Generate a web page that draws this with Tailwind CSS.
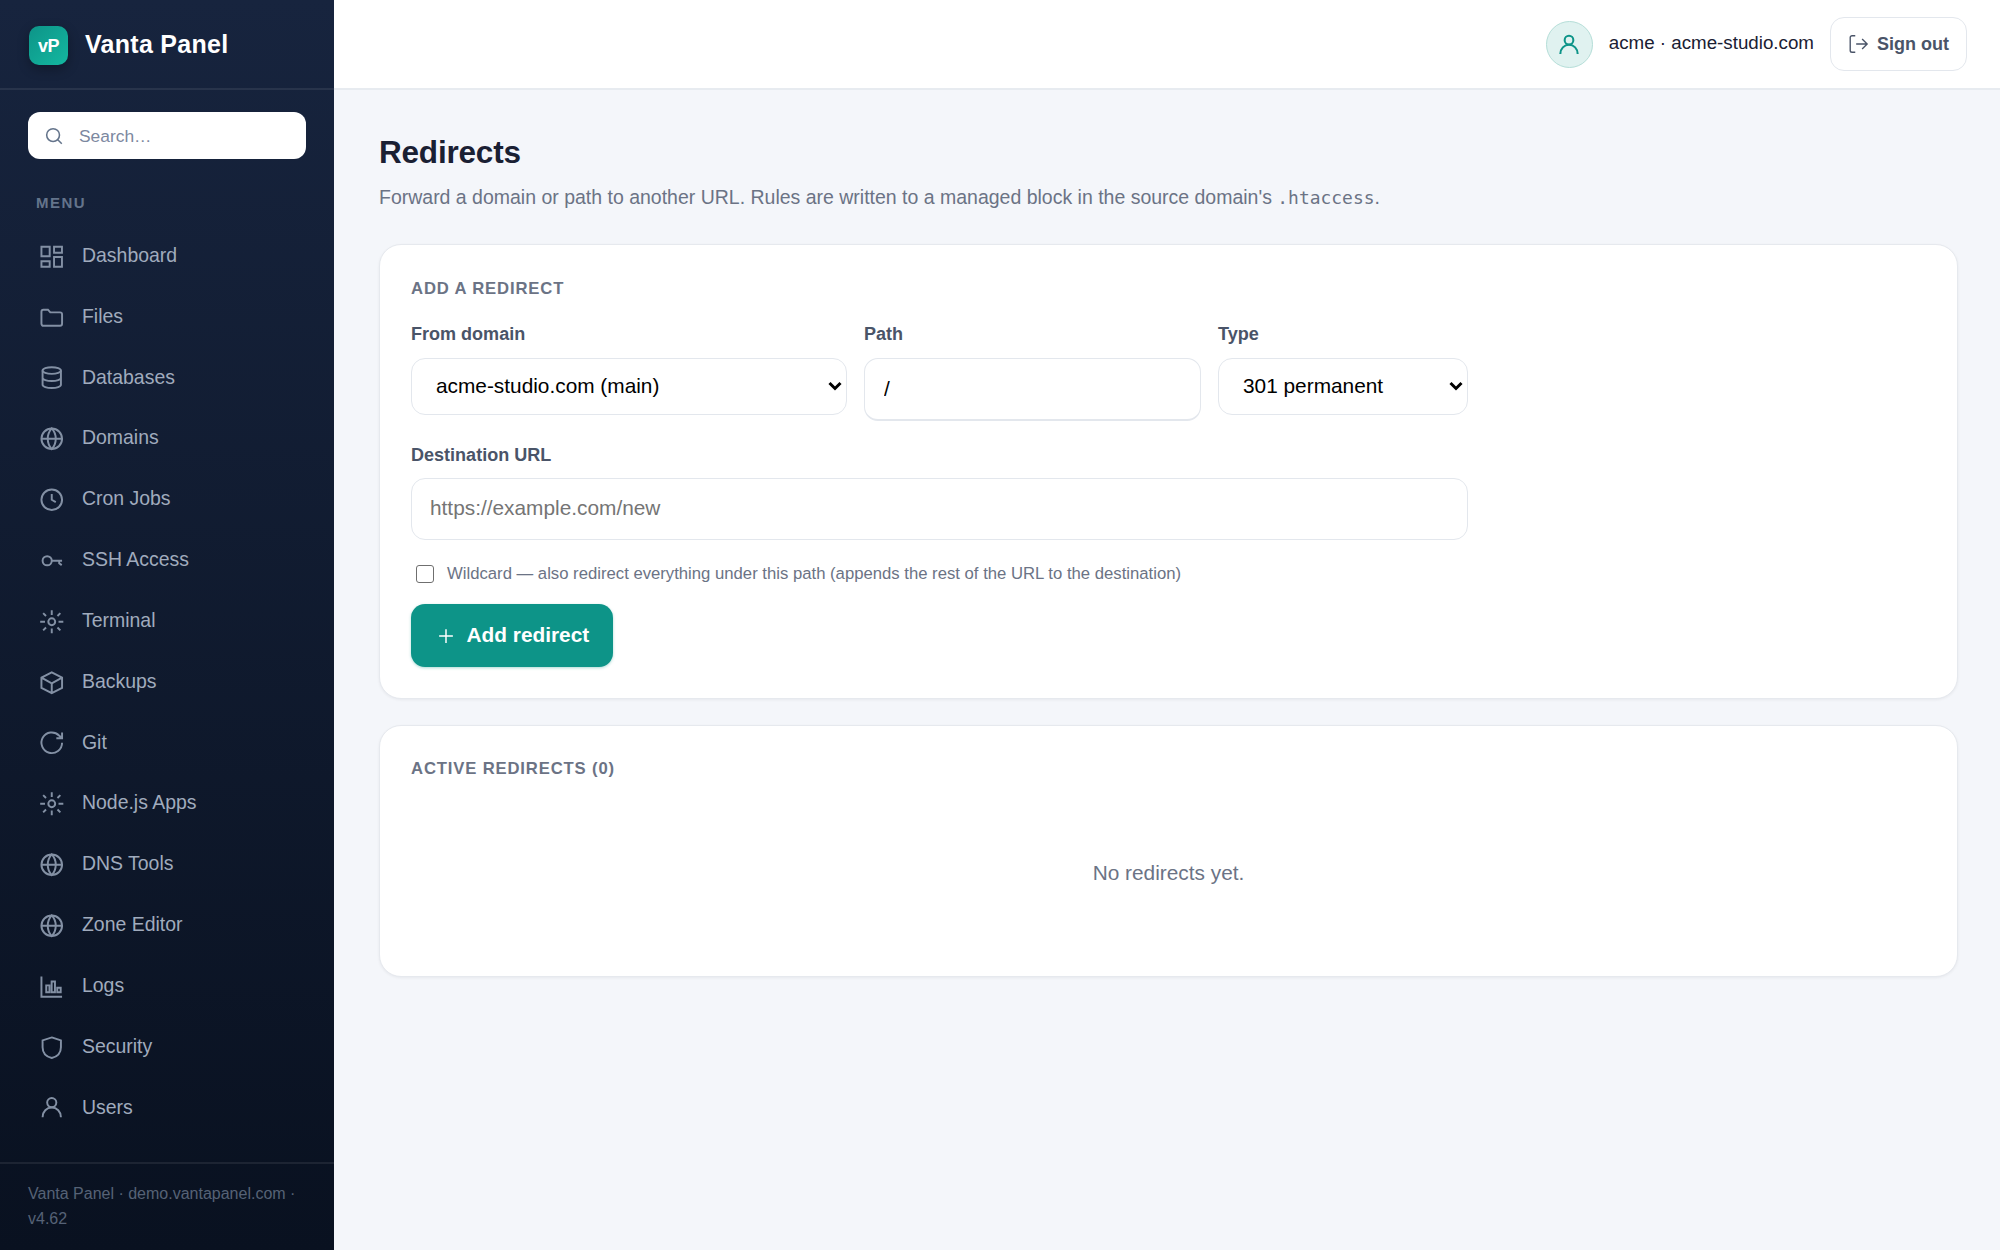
<!DOCTYPE html>
<html lang="en">
<head>
  <meta charset="UTF-8">
  <meta name="viewport" content="width=device-width, initial-scale=1.0">
  <title>Redirects - Vanta Panel</title>
  <script src="https://cdn.jsdelivr.net/npm/@tailwindcss/browser@4"></script>
</head>
<body class="flex h-screen overflow-hidden bg-[#f4f6fa] font-['Liberation_Sans',Arial,sans-serif] text-[#1a2033]">

  <!-- Icon set -->
  <svg class="hidden">
    <symbol id="i-dashboard" viewBox="0 0 24 24"><path d="M3 3.200h7.200v8.400H3zM14 3.200h6.900v5.300H14zM14 12.200h6.900v8.600H14zM3 16h7.200v4.800H3z"/></symbol>
    <symbol id="i-folder" viewBox="0 0 24 24"><path d="M3 6.700a1.700 1.700 0 0 1 1.700-1.700h4l2 2.300h8.600A1.700 1.700 0 0 1 21 9v8.300a1.700 1.700 0 0 1-1.700 1.700H4.700A1.700 1.700 0 0 1 3 17.300z"/></symbol>
    <symbol id="i-database" viewBox="0 0 24 24"><ellipse cx="12" cy="5.700" rx="8" ry="2.900"/><path d="M4 5.700v12.400c0 1.600 3.580 2.900 8 2.900s8-1.300 8-2.900V5.700M4 12c0 1.600 3.580 2.900 8 2.900s8-1.300 8-2.900"/></symbol>
    <symbol id="i-globe" viewBox="0 0 24 24"><circle cx="12" cy="12" r="9"/><path d="M3 12h18M12 3c2.400 2.600 3.500 5.700 3.500 9s-1.100 6.400-3.500 9c-2.400-2.600-3.500-5.700-3.500-9s1.100-6.400 3.500-9z"/></symbol>
    <symbol id="i-clock" viewBox="0 0 24 24"><circle cx="12" cy="12" r="9"/><path d="M12 7v5l3.500 2"/></symbol>
    <symbol id="i-key" viewBox="0 0 24 24"><circle cx="8" cy="12" r="4"/><path d="M12 12h9M18.500 12v2.200l2.200 1.600"/></symbol>
    <symbol id="i-gear" viewBox="0 0 24 24"><circle cx="12" cy="12" r="3"/><path d="M12 1.900v4.200M12 17.900v4.200M1.900 12h4.200M17.900 12h4.200M4.500 4.500l2.500 2.500M17 17l2.500 2.500M4.500 19.500L7 17M17 7l2.500-2.500"/></symbol>
    <symbol id="i-box" viewBox="0 0 24 24"><path d="M12 2.900l9 4.700v8.800l-9 4.700-9-4.700V7.600zM3 7.600l9 4.900 9-4.900M12 12.500v8.600"/></symbol>
    <symbol id="i-refresh" viewBox="0 0 24 24"><path d="M21 12a9 9 0 1 1-2.640-6.360L21 8M21 3v5h-5"/></symbol>
    <symbol id="i-chart" viewBox="0 0 24 24"><path d="M3 3v17.800h18M7.200 10.800h2.800v6H7.200zM11.900 7.400h2.900v9.400h-2.900zM16.800 12.800h3v4h-3z"/></symbol>
    <symbol id="i-shield" viewBox="0 0 24 24"><path d="M12 3l8 2.600v5.900c0 5-3.200 8.200-8 9.500-4.800-1.300-8-4.500-8-9.500V5.600z"/></symbol>
    <symbol id="i-user" viewBox="0 0 24 24"><circle cx="12" cy="7.500" r="4"/><path d="M4 20.200c0-4.800 3.600-8.400 8-8.400s8 3.600 8 8.400"/></symbol>
    <symbol id="i-search" viewBox="0 0 24 24"><circle cx="11" cy="11" r="7"/><path d="M20.500 20.500l-4.400-4.400"/></symbol>
    <symbol id="i-logout" viewBox="0 0 24 24"><path d="M9 3H5.500a2 2 0 0 0-2 2v14a2 2 0 0 0 2 2H9M10 12h12M16.500 6.500L22 12l-5.500 5.500"/></symbol>
    <symbol id="i-plus" viewBox="0 0 24 24"><path d="M12 4.500v15M4.500 12h15"/></symbol>
  </svg>

  <!-- Sidebar -->
  <aside class="flex w-[334px] shrink-0 flex-col bg-linear-to-b from-[#17243e] to-[#091120]">
    <div class="flex h-[90px] shrink-0 items-center gap-[17px] border-b-2 border-white/8 px-[29px]">
      <div class="mt-0.5 flex size-[39px] items-center justify-center rounded-[10px] bg-linear-to-br from-[#0d9488] to-[#14b8a0] pt-px text-lg font-bold tracking-[-0.500px] text-white shadow-[0_4px_12px_rgba(0,0,0,0.3)]">vP</div>
      <span class="pt-px text-[25px] font-bold tracking-[0.280px] text-white">Vanta Panel</span>
    </div>

    <div class="mx-7 mt-[22px] flex h-[47px] shrink-0 items-center gap-[14px] rounded-xl bg-white pl-[15px]">
      <svg class="size-[22px] shrink-0 fill-none stroke-[#64748b] stroke-[1.700]"><use href="#i-search"/></svg>
      <input type="text" placeholder="Search…" class="w-40 pt-px text-[17.400px] text-[#1a2033] outline-none placeholder:text-[#7c88a0]">
    </div>

    <div class="mt-[34px] pl-9 text-[15px] leading-5 font-bold tracking-[1.500px] text-[#64748b]">MENU</div>

    <nav id="menu" class="mt-3 flex flex-col"></nav>

    <div class="mt-auto h-[88px] border-t-2 border-white/8 px-7 pt-[17px] text-[16px] leading-[25px] text-[#566276]">Vanta Panel · demo.vantapanel.com · v4.62</div>
  </aside>

  <div class="flex min-w-0 flex-1 flex-col">
    <!-- Top bar -->
    <header class="flex h-[90px] shrink-0 items-center justify-end border-b-2 border-[#e7ebf0] bg-white pr-[33px]">
      <div class="flex size-[47px] items-center justify-center rounded-full border border-[#b5ded8] bg-[#e0f2f0]">
        <svg class="mt-px size-[26px] fill-none stroke-[#0d9488] stroke-[1.900]"><use href="#i-user"/></svg>
      </div>
      <span class="ml-4 pb-px text-[18.750px]">acme · acme-studio.com</span>
      <button class="ml-4 flex h-[54px] w-[137px] items-center gap-2 rounded-[14px] border border-[#e3e7ed] pl-4 text-lg font-bold text-[#4a5468]">
        <svg class="size-[22px] fill-none stroke-current stroke-[1.500]"><use href="#i-logout"/></svg>
        <span class="pb-px">Sign out</span>
      </button>
    </header>

    <main class="flex-1 pt-[42px] pr-[42px] pl-[45px]">
      <h1 class="text-[31.500px] leading-10 font-bold tracking-[-0.200px]">Redirects</h1>
      <p class="mt-2.5 text-[19.490px] leading-[30px] text-[#6b7385]">Forward a domain or path to another URL. Rules are written to a managed block in the source domain's <code class="font-['DejaVu_Sans_Mono',monospace] text-[17.950px]">.htaccess</code>.</p>

      <section class="mt-[31px] h-[455px] rounded-[22px] border border-[#e6e9ee] bg-white px-[31px] pt-[34px] shadow-[0_1px_3px_rgba(16,24,40,0.06)]">
        <h2 class="text-[16.670px] leading-5 font-bold tracking-[0.850px] text-[#6b7385]">ADD A REDIRECT</h2>

        <form>
          <div class="mt-[23px] flex gap-[17px] text-[20.830px] text-black">
            <div class="w-[436px]">
              <label class="block text-[18.050px] leading-6 font-bold text-[#4a5468]">From domain</label>
              <div class="relative mt-3">
                <select class="block h-[57px] w-full appearance-none rounded-[14px] border border-[#e3e7ed] bg-white pb-px pl-6 outline-none"><option>acme-studio.com (main)</option></select>
                <svg viewBox="0 0 14 10" class="absolute top-[23px] right-[5px] h-2.5 w-3.5 fill-none stroke-black stroke-3"><path d="M1.500 2l5.500 5.500L12.500 2"/></svg>
              </div>
            </div>
            <div class="w-[337px]">
              <label class="block text-[18.050px] leading-6 font-bold text-[#4a5468]">Path</label>
              <input type="text" value="/" class="mt-3 block h-[63px] w-full rounded-[14px] border border-b-2 border-[#e3e7ed] px-[19px] pb-px outline-none">
            </div>
            <div class="w-[250px]">
              <label class="block text-[18.050px] leading-6 font-bold text-[#4a5468]">Type</label>
              <div class="relative mt-3">
                <select class="block h-[57px] w-full appearance-none rounded-[14px] border border-[#e3e7ed] bg-white pb-px pl-6 outline-none"><option>301 permanent</option></select>
                <svg viewBox="0 0 14 10" class="absolute top-[23px] right-[5px] h-2.5 w-3.5 fill-none stroke-black stroke-3"><path d="M1.500 2l5.500 5.500L12.500 2"/></svg>
              </div>
            </div>
          </div>

          <label class="mt-[22px] block text-[18.050px] leading-6 font-bold text-[#4a5468]">Destination URL</label>
          <input type="text" placeholder="https://example.com/new" class="mt-[11px] block h-[62px] w-[1057px] rounded-[14px] border border-[#e3e7ed] px-[18px] pb-0.5 text-[20.830px] outline-none placeholder:text-[#757575]">

          <label class="mt-[22px] flex h-6 items-center gap-[13px] pl-[5px] text-[16.700px] text-[#6b7385]">
            <input type="checkbox" class="size-[18px] appearance-none rounded-[3px] border-[1.500px] border-[#6f6f6f]">
            Wildcard — also redirect everything under this path (appends the rest of the URL to the destination)
          </label>

          <button type="button" class="mt-[18px] flex h-[63px] w-[202px] items-center gap-[10px] rounded-[14px] bg-[#0d9488] pb-px pl-[23.500px] text-[20.830px] font-bold text-white shadow-[0_1px_3px_rgba(13,148,136,0.35)]">
            <svg class="mt-0.5 size-[22px] fill-none stroke-current stroke-[1.600]"><use href="#i-plus"/></svg>
            Add redirect
          </button>
        </form>
      </section>

      <section class="mt-[26px] h-[252px] rounded-[22px] border border-[#e6e9ee] bg-white px-[31px] pt-[33px] shadow-[0_1px_3px_rgba(16,24,40,0.06)]">
        <h2 class="text-[16.670px] leading-5 font-bold tracking-[0.850px] text-[#6b7385]">ACTIVE REDIRECTS (0)</h2>
        <p class="mt-[79px] text-center text-[20.830px] leading-[30px] text-[#6b7385]">No redirects yet.</p>
      </section>
    </main>
  </div>

  <script>
    const items = [
      ["dashboard", "Dashboard"],
      ["folder", "Files"],
      ["database", "Databases"],
      ["globe", "Domains"],
      ["clock", "Cron Jobs"],
      ["key", "SSH Access"],
      ["gear", "Terminal"],
      ["box", "Backups"],
      ["refresh", "Git"],
      ["gear", "Node.js Apps"],
      ["globe", "DNS Tools"],
      ["globe", "Zone Editor"],
      ["chart", "Logs"],
      ["shield", "Security"],
      ["user", "Users"],
    ];

    document.getElementById("menu").innerHTML = items.map(([icon, label]) => `
      <a class="flex h-[60.850px] items-center gap-[16.500px] pl-[38px] text-[19.440px] text-[#a0abbd]">
        <svg class="mt-0.5 size-[27.500px] fill-none stroke-[#8390a4] stroke-[1.700]"><use href="#i-${icon}"/></svg>
        <span>${label}</span>
      </a>`).join("");
  </script>
</body>
</html>
